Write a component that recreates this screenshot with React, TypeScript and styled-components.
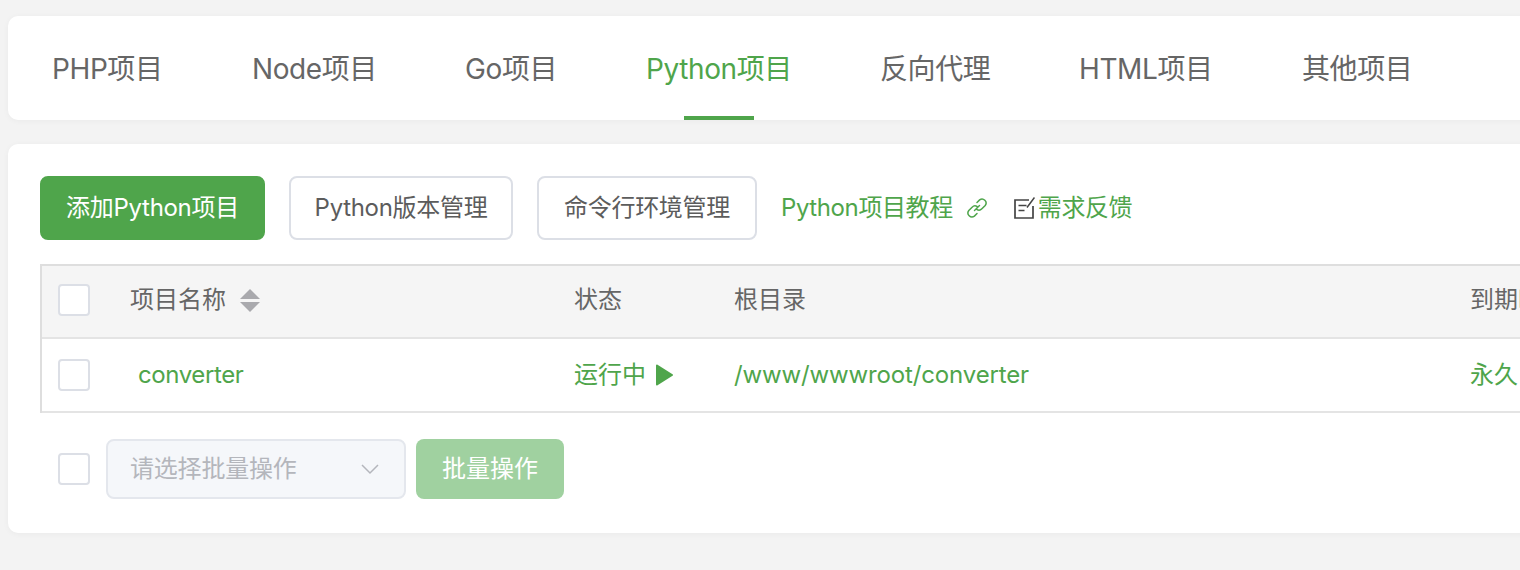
import React from 'react';
import styled, { createGlobalStyle } from 'styled-components';

const GREEN = '#4fa54b';

const GlobalStyle = createGlobalStyle`
  html, body {
    margin: 0;
    padding: 0;
    width: 1520px;
    height: 570px;
    overflow: hidden;
    background: #f3f3f3;
    font-family: "Inter", "Noto Sans CJK SC", sans-serif;
    line-height: 1.2;
  }
  * { box-sizing: border-box; }
`;

const Page = styled.div`
  width: 1544px;
  padding: 16px 0 0 8px;
`;

const Card = styled.div`
  background: #fff;
  border-radius: 10px;
  box-shadow: 0 1px 6px rgba(0, 0, 0, 0.04);
`;

const TabBar = styled(Card)`
  display: flex;
  height: 104px;
  padding-left: 44px;
`;

const Tab = styled.div<{ $active?: boolean; $width: number }>`
  position: relative;
  display: flex;
  align-items: center;
  width: ${(p) => p.$width}px;
  height: 104px;
  padding-top: 3px;
  font-size: 28px;
  letter-spacing: -0.4px;
  white-space: nowrap;
  color: ${(p) => (p.$active ? GREEN : '#666')};

  ${(p) =>
    p.$active &&
    `
    &::after {
      content: '';
      position: absolute;
      left: 38px;
      bottom: 0;
      width: 70px;
      height: 4px;
      background: ${GREEN};
    }
  `}
`;

const Panel = styled(Card)`
  margin-top: 24px;
  height: 389px;
  padding: 32px 0 0 32px;
`;

const Toolbar = styled.div`
  display: flex;
  align-items: center;
  height: 64px;
`;

const Button = styled.div<{ $primary?: boolean; $width: number }>`
  display: flex;
  align-items: center;
  justify-content: center;
  width: ${(p) => p.$width}px;
  height: 64px;
  margin-right: 24px;
  font-size: 24px;
  letter-spacing: -0.3px;
  white-space: nowrap;
  border-radius: 8px;
  color: ${(p) => (p.$primary ? '#fff' : '#5c5c5c')};
  background: ${(p) => (p.$primary ? GREEN : '#fff')};
  border: 2px solid ${(p) => (p.$primary ? GREEN : '#dcdfe6')};
`;

const GuideLink = styled.div`
  display: flex;
  align-items: center;
  font-size: 24px;
  letter-spacing: -0.4px;
  color: ${GREEN};
  white-space: nowrap;
`;

const LinkIcon = styled.svg`
  width: 22px;
  height: 22px;
  margin: 0 25px 0 13px;
`;

const NoteIcon = styled.svg`
  width: 22px;
  height: 24px;
  margin-right: 3px;
`;

const Table = styled.div`
  margin-top: 24px;
  width: 1500px;
  border-top: 2px solid #dedede;
  border-left: 2px solid #dedede;
`;

const Row = styled.div<{ $head?: boolean }>`
  display: grid;
  grid-template-columns: 88px 444px 160px 736px 1fr;
  align-items: center;
  height: ${(p) => (p.$head ? 73 : 74)}px;
  padding-bottom: ${(p) => (p.$head ? 3 : 0)}px;
  font-size: 24px;
  white-space: nowrap;
  color: ${(p) => (p.$head ? '#666' : GREEN)};
  background: ${(p) => (p.$head ? '#f5f5f5' : '#fff')};
  border-bottom: 2px solid #e4e4e4;
`;

const CheckBox = styled.span`
  display: block;
  width: 32px;
  height: 32px;
  background: #fff;
  border: 2px solid #dcdfe6;
  border-radius: 4px;
`;

const CheckCell = styled.div`
  padding-left: 16px;
`;

const NameCell = styled.div<{ $inset?: boolean }>`
  display: flex;
  align-items: center;
  padding-left: ${(p) => (p.$inset ? 8 : 0)}px;
  letter-spacing: ${(p) => (p.$inset ? '-0.4px' : '0')};
`;

const PathCell = styled.div`
  letter-spacing: -0.14px;
`;

const SortIcon = styled.svg`
  width: 20px;
  height: 24px;
  margin-left: 14px;
`;

const PlayIcon = styled.svg`
  width: 19px;
  height: 24px;
  margin-left: 9px;
`;

const Footer = styled.div`
  display: flex;
  align-items: center;
  margin-top: 26px;
  padding-left: 18px;
`;

const BatchSelect = styled.div`
  display: flex;
  align-items: center;
  justify-content: space-between;
  width: 300px;
  height: 60px;
  margin-left: 16px;
  padding: 0 24px 0 22px;
  font-size: 24px;
  letter-spacing: -0.2px;
  color: #b4b6bc;
  background: #f5f7fa;
  border: 2px solid #e4e7ed;
  border-radius: 8px;
`;

const ChevronIcon = styled.svg`
  width: 20px;
  height: 12px;
`;

const BatchButton = styled.div`
  display: flex;
  align-items: center;
  justify-content: center;
  width: 148px;
  height: 60px;
  margin-left: 10px;
  font-size: 24px;
  color: #fff;
  background: #a0d1a0;
  border-radius: 8px;
`;

const tabs = [
  { label: 'PHP项目', width: 200 },
  { label: 'Node项目', width: 213 },
  { label: 'Go项目', width: 181 },
  { label: 'Python项目', width: 234 },
  { label: '反向代理', width: 199 },
  { label: 'HTML项目', width: 223 },
  { label: '其他项目', width: 120 },
];

export default function App() {
  return (
    <Page>
      <GlobalStyle />
      <TabBar>
        {tabs.map((t) => (
          <Tab key={t.label} $width={t.width} $active={t.label === 'Python项目'}>
            {t.label}
          </Tab>
        ))}
      </TabBar>
      <Panel>
        <Toolbar>
          <Button $primary $width={225}>添加Python项目</Button>
          <Button $width={224}>Python版本管理</Button>
          <Button $width={220}>命令行环境管理</Button>
          <GuideLink>
            Python项目教程
            <LinkIcon viewBox="0 0 22 22" fill="none" stroke={GREEN} strokeWidth="1.5" strokeLinecap="round">
              <path d="M8.5 13.5l5-5" />
              <path d="M11 5.5l2.6-2.6a4 4 0 0 1 5.6 5.6l-3.3 3.3a4 4 0 0 1-5.2.5" />
              <path d="M11 16.5l-2.6 2.6a4 4 0 0 1-5.6-5.6l3.3-3.3a4 4 0 0 1 5.2-.5" />
            </LinkIcon>
          </GuideLink>
          <GuideLink>
            <NoteIcon viewBox="0 0 22 24" fill="none" stroke="#444" strokeWidth="1.7">
              <path d="M16 4H2v18h18V10" />
              <path d="M5.5 9.5h8M5.5 14.5h6" strokeWidth="1.5" />
              <path d="M14 11.5L21.5 1.5" strokeWidth="1.5" />
            </NoteIcon>
            需求反馈
          </GuideLink>
        </Toolbar>
        <Table>
          <Row $head>
            <CheckCell><CheckBox /></CheckCell>
            <NameCell>
              项目名称
              <SortIcon viewBox="0 0 20 24" fill="#a9a9ad">
                <path d="M10 1l10 10H0z" />
                <path d="M0 14h20L10 24z" />
              </SortIcon>
            </NameCell>
            <div>状态</div>
            <div>根目录</div>
            <div>到期时间</div>
          </Row>
          <Row>
            <CheckCell><CheckBox /></CheckCell>
            <NameCell $inset>converter</NameCell>
            <NameCell>
              运行中
              <PlayIcon viewBox="0 0 19 24" fill={GREEN} stroke={GREEN} strokeWidth="2" strokeLinejoin="round">
                <path d="M2 2.5l15 9.5-15 9.5z" />
              </PlayIcon>
            </NameCell>
            <PathCell>/www/wwwroot/converter</PathCell>
            <div>永久</div>
          </Row>
        </Table>
        <Footer>
          <CheckBox />
          <BatchSelect>
            请选择批量操作
            <ChevronIcon viewBox="0 0 20 12" fill="none" stroke="#b4b6bc" strokeWidth="1.5">
              <path d="M2 2l8 8 8-8" />
            </ChevronIcon>
          </BatchSelect>
          <BatchButton>批量操作</BatchButton>
        </Footer>
      </Panel>
    </Page>
  );
}
